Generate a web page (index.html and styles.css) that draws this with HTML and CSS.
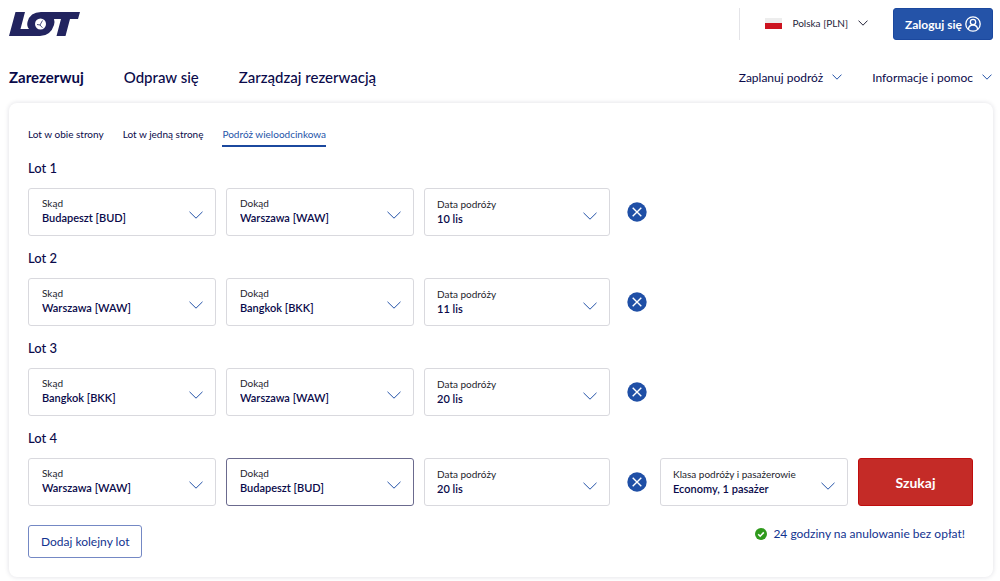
FILE: index.html
```html
<!DOCTYPE html>
<html lang="pl">
<head>
<meta charset="utf-8">
<meta name="viewport" content="width=device-width, initial-scale=1">
<title>LOT</title>
<link rel="stylesheet" href="styles.css">
</head>
<body>
<svg class="defs" aria-hidden="true">
  <symbol id="chevron" viewBox="0 0 14 8"><path d="M.5 .8 7 7.2 13.5 .8" fill="none" stroke="currentColor" stroke-width="1"/></symbol>
  <symbol id="chevron-small" viewBox="0 0 10 6"><path d="M.5 .6 5 5.200 9.500 .6" fill="none" stroke="currentColor" stroke-width="1"/></symbol>
  <symbol id="cross" viewBox="0 0 20 20"><circle cx="10" cy="10" r="9.7" fill="#1f4fa6"/><path d="M5.7 5.7l8.6 8.6M14.3 5.7l-8.6 8.6" stroke="#fff" stroke-width="1.4"/></symbol>
</svg>
<header class="top">
  <a class="logo" href="#" aria-label="LOT">
    <svg width="72" height="26" viewBox="0 0 72 26">
      <path fill="#22245f" d="M6.500 1H16L11.500 18H20Q17.500 15 18.500 11Q21 1 32 1H71L69 8H61L56.500 25H47.500L52 8H45Q46 11 45 14Q41.500 25 31 25H0Z"/>
      <circle cx="31.500" cy="13" r="5.500" fill="#fff"/>
      <path d="M31 14l2.500-4.500M31 14l-3-.5M31 14l2.500 2.800" stroke="#22245f" stroke-width=".8" fill="none"/>
    </svg>
  </a>
  <div class="account">
    <button class="locale" type="button">
      <svg width="17" height="11" viewBox="0 0 17 11"><path fill="#ededed" d="M0 0h17v6H0z"/><path fill="#cc1420" d="M0 5h17v6H0z"/></svg>
      <span>Polska [PLN]</span>
      <svg class="chev-sm" aria-hidden="true"><use href="#chevron-small"/></svg>
    </button>
    <button class="login" type="button">Zaloguj się
      <svg width="16" height="16" viewBox="0 0 16 16" fill="none" stroke="#fff" stroke-width="1.300"><circle cx="8" cy="8" r="7.200"/><circle cx="8" cy="6" r="2.700"/><path d="M3.400 13.300Q3.800 9 8 9T12.600 13.300"/></svg>
    </button>
  </div>
</header>
<nav class="nav">
  <div class="nav-main">
    <a class="current" href="#">Zarezerwuj</a>
    <a href="#">Odpraw się</a>
    <a href="#">Zarządzaj rezerwacją</a>
  </div>
  <div class="nav-side">
    <a href="#">Zaplanuj podróż <svg class="chev-sm" aria-hidden="true"><use href="#chevron-small"/></svg></a>
    <a href="#">Informacje i pomoc <svg class="chev-sm" aria-hidden="true"><use href="#chevron-small"/></svg></a>
  </div>
</nav>
<main class="card">
  <div class="tabs">
    <a href="#">Lot w obie strony</a>
    <a href="#">Lot w jedną stronę</a>
    <a class="active" href="#">Podróż wieloodcinkowa</a>
  </div>
  <form>
    <section class="flight">
      <h2>Lot 1</h2>
      <div class="row">
        <label class="field"><span>Skąd</span><select><option>Budapeszt [BUD]</option></select><svg class="chev" aria-hidden="true"><use href="#chevron"/></svg></label>
        <label class="field"><span>Dokąd</span><select><option>Warszawa [WAW]</option></select><svg class="chev" aria-hidden="true"><use href="#chevron"/></svg></label>
        <label class="field date"><span>Data podróży</span><select><option>10 lis</option></select><svg class="chev" aria-hidden="true"><use href="#chevron"/></svg></label>
        <button class="remove" type="button" aria-label="Usuń lot 1"><svg width="20" height="20"><use href="#cross"/></svg></button>
      </div>
    </section>
    <section class="flight">
      <h2>Lot 2</h2>
      <div class="row">
        <label class="field"><span>Skąd</span><select><option>Warszawa [WAW]</option></select><svg class="chev" aria-hidden="true"><use href="#chevron"/></svg></label>
        <label class="field"><span>Dokąd</span><select><option>Bangkok [BKK]</option></select><svg class="chev" aria-hidden="true"><use href="#chevron"/></svg></label>
        <label class="field date"><span>Data podróży</span><select><option>11 lis</option></select><svg class="chev" aria-hidden="true"><use href="#chevron"/></svg></label>
        <button class="remove" type="button" aria-label="Usuń lot 2"><svg width="20" height="20"><use href="#cross"/></svg></button>
      </div>
    </section>
    <section class="flight">
      <h2>Lot 3</h2>
      <div class="row">
        <label class="field"><span>Skąd</span><select><option>Bangkok [BKK]</option></select><svg class="chev" aria-hidden="true"><use href="#chevron"/></svg></label>
        <label class="field"><span>Dokąd</span><select><option>Warszawa [WAW]</option></select><svg class="chev" aria-hidden="true"><use href="#chevron"/></svg></label>
        <label class="field date"><span>Data podróży</span><select><option>20 lis</option></select><svg class="chev" aria-hidden="true"><use href="#chevron"/></svg></label>
        <button class="remove" type="button" aria-label="Usuń lot 3"><svg width="20" height="20"><use href="#cross"/></svg></button>
      </div>
    </section>
    <section class="flight">
      <h2>Lot 4</h2>
      <div class="row">
        <label class="field"><span>Skąd</span><select><option>Warszawa [WAW]</option></select><svg class="chev" aria-hidden="true"><use href="#chevron"/></svg></label>
        <label class="field selected"><span>Dokąd</span><select><option>Budapeszt [BUD]</option></select><svg class="chev" aria-hidden="true"><use href="#chevron"/></svg></label>
        <label class="field date"><span>Data podróży</span><select><option>20 lis</option></select><svg class="chev" aria-hidden="true"><use href="#chevron"/></svg></label>
        <button class="remove" type="button" aria-label="Usuń lot 4"><svg width="20" height="20"><use href="#cross"/></svg></button>
        <label class="field date"><span>Klasa podróży i pasażerowie</span><select><option>Economy, 1 pasażer</option></select><svg class="chev" aria-hidden="true"><use href="#chevron"/></svg></label>
        <button class="search" type="submit">Szukaj</button>
      </div>
    </section>
    <div class="actions">
      <button class="add" type="button">Dodaj kolejny lot</button>
      <p class="notice">
        <svg width="12" height="12" viewBox="0 0 12 12"><circle cx="6" cy="6" r="6" fill="#2f9a1c"/><path d="M3.200 6.200l2 2 3.600-3.800" fill="none" stroke="#fff" stroke-width="1.600"/></svg>
        24 godziny na anulowanie bez opłat!
      </p>
    </div>
  </form>
</main>
</body>
</html>
```

FILE: styles.css
```css
* { box-sizing: border-box; }
body {
  margin: 0;
  padding: 8px 7px 4px 9px;
  background: #fff;
  color: #0a0a4a;
  font-family: Lato, "Liberation Sans", sans-serif;
  font-weight: 500;
}
a { color: inherit; text-decoration: none; }
button, select { font: inherit; color: inherit; }
button { cursor: pointer; }
svg { display: block; flex: none; }
.defs { position: absolute; width: 0; height: 0; }

.top { display: flex; justify-content: space-between; align-items: center; height: 32px; }
.account { display: flex; align-items: center; height: 32px; }
.locale {
  display: flex; align-items: center; gap: 10px; height: 32px;
  padding: 0 25px 2px;
  border: 0; border-left: 1px solid #e4e4e8; background: none;
  color: #25253a; font-size: 10px; font-weight: 400;
}
.login {
  display: flex; align-items: center; justify-content: center; gap: 3px;
  height: 32px; padding: 0 11px;
  border: 1px solid #1b489e; border-radius: 3px;
  background: #2453a8; color: #fff; font-size: 12px; font-weight: 700;
  white-space: nowrap;
}
.chev-sm { width: 10px; height: 6px; }

.nav { display: flex; justify-content: space-between; align-items: center; height: 20px; margin-top: 27px; }
.nav-main { display: flex; gap: 40px; font-size: 15px; }
.current { font-weight: 700; }
.nav-side { display: flex; gap: 30px; padding-right: 1px; font-size: 12px; font-weight: 400; }
.nav-side a { display: flex; align-items: center; gap: 9px; }
.nav-side svg { color: #2453a8; }

.card {
  margin-top: 16px; padding: 21px 20px 19px 19px;
  border-radius: 8px; background: #fff;
  box-shadow: 0 0 5px rgba(20, 20, 60, .14);
}
.tabs { display: flex; gap: 19px; font-size: 10px; line-height: 20px; font-weight: 400; }
.tabs a { padding-bottom: 1px; border-bottom: 2px solid transparent; }
.tabs .active { color: #2453a8; border-color: #1b489e; }

.flight { margin-top: 12px; }
.tabs + form { margin-top: 11px; }
h2 { margin: 0 0 10px; font-size: 13px; line-height: 20px; font-weight: 500; }
.row {
  display: grid; gap: 10px; align-items: center;
  grid-template-columns: 188fr 188fr 186fr 30fr 188fr 115fr;
}
.flight:first-child { margin-top: 0; }
.field {
  display: grid; grid-template-columns: 1fr 14px; align-content: center;
  height: 48px; padding: 0 12px 2px 13px;
  border: 1px solid #d9d9de; border-radius: 3px;
  color: #0a0a4a; white-space: nowrap;
}
.field span { grid-column: 1; color: #1d1d2c; font-size: 10px; line-height: 14px; font-weight: 400; }
.field select {
  grid-column: 1; width: 100%; min-width: 0; height: 16px; padding: 0;
  appearance: none; border: 0; background: none; outline: 0;
  font-size: 11px; line-height: 16px; font-weight: 600;
}
.chev { grid-column: 2; grid-row: 1 / 3; align-self: center; width: 14px; height: 8px; margin-top: 8px; color: #2453a8; }
.date { padding-bottom: 0; padding-left: 12px; }
.selected { border-color: #6b6a8e; }
.remove { justify-self: end; padding: 0; margin-right: 3px; border: 0; background: none; }
.search {
  height: 48px; border: 1px solid #c00d0d; border-radius: 3px;
  background: #c42b27; color: #fff; font-size: 14px; font-weight: 700;
}

.actions { display: flex; justify-content: space-between; align-items: flex-start; margin-top: 19px; }
.add {
  height: 33px; padding: 0 12px;
  border: 1px solid #7488c4; border-radius: 3px; background: #fff;
  color: #12338f; font-size: 12px; font-weight: 400;
}
.notice { display: flex; align-items: center; gap: 6px; margin: 0 8px 0 0; color: #12338f; font-size: 12px; line-height: 18px; font-weight: 400; }
```
